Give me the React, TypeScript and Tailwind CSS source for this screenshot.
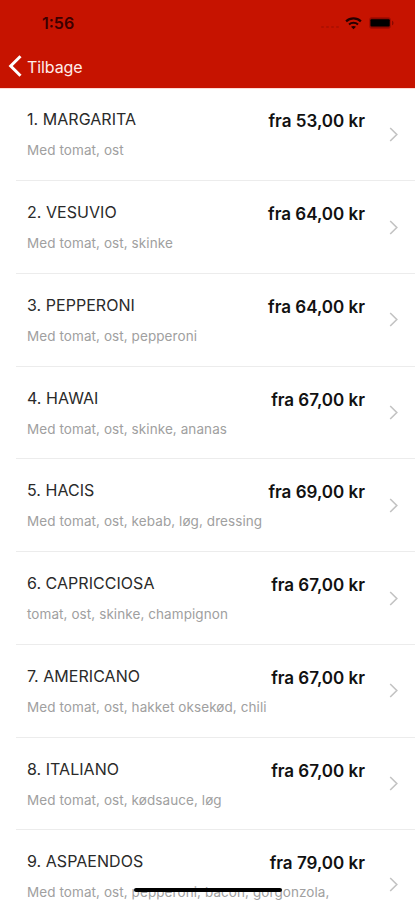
interface Pizza {
  name: string;
  toppings: string;
  price: string;
}

const pizzas: Pizza[] = [
  { name: "1. MARGARITA", toppings: "Med tomat, ost", price: "fra 53,00 kr" },
  { name: "2. VESUVIO", toppings: "Med tomat, ost, skinke", price: "fra 64,00 kr" },
  { name: "3. PEPPERONI", toppings: "Med tomat, ost, pepperoni", price: "fra 64,00 kr" },
  { name: "4. HAWAI", toppings: "Med tomat, ost, skinke, ananas", price: "fra 67,00 kr" },
  { name: "5. HACIS", toppings: "Med tomat, ost, kebab, løg, dressing", price: "fra 69,00 kr" },
  { name: "6. CAPRICCIOSA", toppings: "tomat, ost, skinke, champignon", price: "fra 67,00 kr" },
  { name: "7. AMERICANO", toppings: "Med tomat, ost, hakket oksekød, chili", price: "fra 67,00 kr" },
  { name: "8. ITALIANO", toppings: "Med tomat, ost, kødsauce, løg", price: "fra 67,00 kr" },
  { name: "9. ASPAENDOS", toppings: "Med tomat, ost, pepperoni, bacon, gorgonzola,", price: "fra 79,00 kr" },
];

function StatusIcons() {
  return (
    <div className="flex items-center">
      <div className="mt-[7px] flex gap-[2px]">
        {[0, 1, 2, 3].map((i) => (
          <span key={i} className="h-[2px] w-[3px] rounded-full bg-[#ae1000]" />
        ))}
      </div>
      <svg className="ml-[6px]" width="17" height="13" viewBox="0 0 17 13" fill="none" stroke="#250000">
        <path d="M1.1 4.4C5.2 0.4 11.8 0.4 15.9 4.4" strokeWidth="2.2" />
        <path d="M4 7.5c2.5-2.3 6.5-2.3 9 0" strokeWidth="2" />
        <path d="M8.5 12.2 6 9.8c1.4-1.2 3.6-1.2 5 0Z" fill="#250000" stroke="none" />
      </svg>
      <svg className="ml-[7px]" width="26" height="12" viewBox="0 0 26 12">
        <rect x="0.5" y="0.5" width="21" height="11" rx="2.5" fill="#8f0900" stroke="#a80c00" />
        <rect x="1.5" y="2.2" width="19.2" height="7.4" rx="1" fill="#000" />
        <path d="M23 3.7c2 .7 2 3.9 0 4.6Z" fill="#8a0900" />
      </svg>
    </div>
  );
}

function Row({ name, toppings, price }: Pizza) {
  return (
    <li className="ml-4 flex h-[92.75px] shrink-0 items-start border-b border-[#ececec] pl-[11px] last:h-[110px]">
      <div className="min-w-0 flex-1 whitespace-nowrap">
        <div className="flex h-[45px] items-end justify-between">
          <span className="text-[16px] leading-[27px] tracking-[0.04px] text-[#2a2a2a]">{name}</span>
          <span className="text-[17px] leading-[24px] font-semibold text-[#111]">{price}</span>
        </div>
        <p className="mt-[7px] text-[13.5px] leading-[20px] tracking-[0.08px] text-[#a0a0a0]">{toppings}</p>
      </div>
      <svg className="mr-[16px] ml-[24px] shrink-0 self-center" width="10" height="15" viewBox="0 0 10 15" fill="none" stroke="#c3c3c3" strokeWidth="1.6">
        <path d="m1.2 1 6.6 6.5L1.2 14" />
      </svg>
    </li>
  );
}

export default function App() {
  return (
    <div className="relative flex h-[900px] w-[415px] flex-col overflow-hidden bg-white font-['Inter','Liberation_Sans',sans-serif]">
      <header className="h-[88.4px] shrink-0 bg-[#c61300]">
        <div className="flex h-[46px] items-center justify-between pr-[20px] pl-[42px]">
          <span className="text-[16px] font-semibold text-[#3c0000]">1:56</span>
          <StatusIcons />
        </div>
        <button className="flex h-[40px] items-center pl-[8px] text-[16px] text-[#ffecea]">
          <svg width="14" height="22" viewBox="0 0 14 22" fill="none" stroke="#fff" strokeWidth="3">
            <path d="M12.5 1.2 2.7 11l9.8 9.8" />
          </svg>
          <span className="mt-[2px] ml-[5px] tracking-[-0.1px]">Tilbage</span>
        </button>
      </header>
      <ul className="flex flex-col shadow-[inset_0_1px_0_#ffd8d4]">
        {pizzas.map((pizza) => (
          <Row key={pizza.name} {...pizza} />
        ))}
      </ul>
      <div className="absolute top-[888px] left-[134px] h-[4px] w-[148px] rounded-full bg-black" />
    </div>
  );
}
